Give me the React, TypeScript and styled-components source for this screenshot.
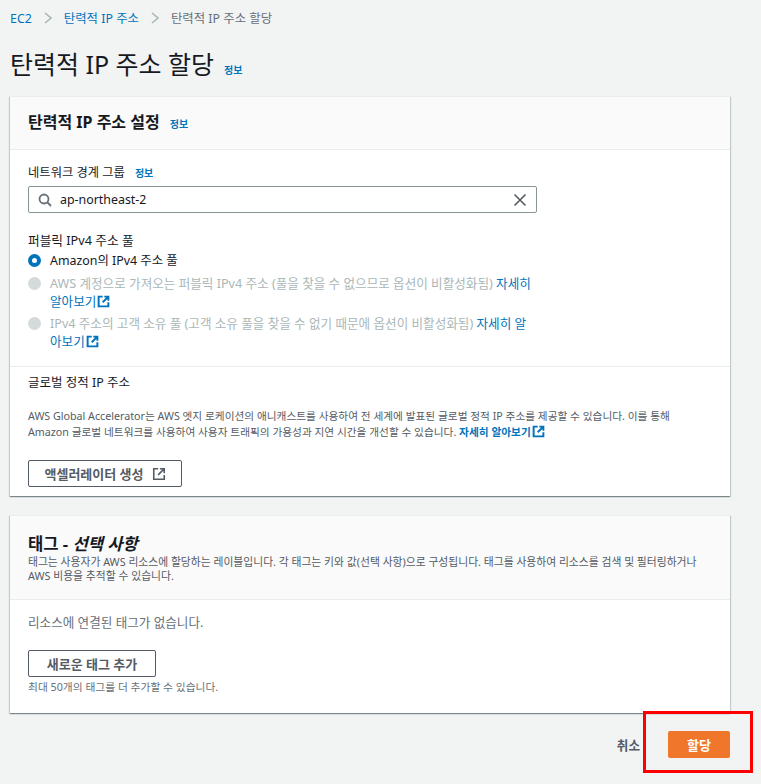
import React from 'react'
import styled, { createGlobalStyle } from 'styled-components'

const GlobalStyle = createGlobalStyle`
  html, body {
    margin: 0;
    padding: 0;
    background: #f2f3f3;
    overflow: hidden;
  }
  body {
    font-family: "Noto Sans", "Noto Sans CJK KR", sans-serif;
    color: #16191f;
    font-size: 13px;
  }
`

const Page = styled.div`
  position: relative;
  width: 761px;
  height: 784px;
  padding: 0 31px 0 10px;
  box-sizing: border-box;
`

const Breadcrumbs = styled.nav`
  display: flex;
  align-items: center;
  height: 36px;
  font-size: 12.4px;
  color: #687078;
`

const Crumb = styled.a`
  color: #0073bb;
`

const Chevron = styled.svg`
  width: 8px;
  height: 12px;
  margin: 0 12px;
  fill: none;
  stroke: #aab7b8;
  stroke-width: 1.6;
`

const PageTitle = styled.div`
  display: flex;
  align-items: baseline;
  gap: 10px;
  height: 60px;
  padding-top: 10px;
  box-sizing: border-box;

  h1 {
    margin: 0;
    font-size: 25px;
    line-height: 36px;
    font-weight: 400;
  }
`

const Info = styled.a`
  color: #0073bb;
  font-size: 10px;
  font-weight: 700;
`

const Card = styled.section`
  display: flow-root;
  background: #fff;
  border-top: 1px solid #eaeded;
  box-shadow: 0 1px 1px 0 rgba(0, 28, 36, 0.3), 1px 1px 1px 0 rgba(0, 28, 36, 0.15),
    -1px 1px 1px 0 rgba(0, 28, 36, 0.15);
  & + & {
    margin-top: 19px;
  }
`

const CardHeader = styled.header<{ $height: number }>`
  height: ${p => p.$height}px;
  box-sizing: border-box;
  background: #fafafa;
  border-bottom: 1px solid #eaeded;
  padding: 0 18px;
  display: flex;
  flex-direction: column;
  justify-content: center;
`

const CardTitle = styled.h2<{ $size: number }>`
  margin: 0;
  font-size: ${p => p.$size}px;
  line-height: 22px;
  font-weight: 700;
  display: flex;
  align-items: baseline;
  gap: 10px;

  em {
    font-style: italic;
  }
`

const Section = styled.div<{ $divided?: boolean }>`
  padding: 14px 18px 0;
  border-bottom: ${p => (p.$divided ? '1px solid #eaeded' : 'none')};
`

const Label = styled.div`
  display: flex;
  align-items: baseline;
  gap: 10px;
  font-size: 12.3px;
  line-height: 18px;
`

const SearchBox = styled.div`
  display: flex;
  align-items: center;
  height: 27px;
  margin-top: 4px;
  box-sizing: border-box;
  border: 1px solid #879596;
  border-radius: 2px;
  padding: 0 9px;
  gap: 8px;
  font-size: 12.4px;
  width: 509px;

  span {
    flex: 1;
  }
`

const Icon = styled.svg`
  flex-shrink: 0;
  fill: none;
  stroke: currentColor;
`

const SearchIcon = styled(Icon)`
  width: 14px;
  height: 14px;
  color: #687078;
  stroke-width: 1.8;
`

const ClearIcon = styled(Icon)`
  width: 14px;
  height: 14px;
  color: #545b64;
  stroke-width: 1.6;
`

const PoolLabel = styled(Label)`
  margin-top: 18px;
  font-size: 12.7px;
`

const RadioList = styled.div`
  display: flex;
  flex-direction: column;
  gap: 4px;
  margin-top: 3px;
  padding-bottom: 15px;
`

const RadioRow = styled.div<{ $disabled?: boolean }>`
  display: flex;
  gap: 9px;
  font-size: ${p => (p.$disabled ? '12.6px' : '12.4px')};
  line-height: 18px;
  color: ${p => (p.$disabled ? '#aab7b8' : '#16191f')};
  width: 505px;

  &:first-child {
    margin-bottom: 1px;
  }
`

const RadioDot = styled.span<{ $checked?: boolean }>`
  width: 13px;
  height: 13px;
  box-sizing: border-box;
  border-radius: 50%;
  flex-shrink: 0;
  margin-top: 2px;
  background: ${p => (p.$checked ? '#fff' : '#d5dbdb')};
  border: ${p => (p.$checked ? '4px solid #0073bb' : 'none')};
`

const Link = styled.a`
  color: #0073bb;
`

const BoldLink = styled(Link)`
  font-weight: 700;
`

const ExternalIcon = styled(Icon)`
  width: 13px;
  height: 13px;
  stroke-width: 2.4;
  vertical-align: -2px;
  margin-left: 1px;
`

const ButtonIcon = styled(ExternalIcon)`
  width: 14px;
  height: 14px;
  stroke-width: 1.8;
  margin-left: 0;
`

const SubHeading = styled.div`
  font-size: 12.5px;
  line-height: 18px;
  margin-top: -7px;
`

const Description = styled.p`
  margin: 16px 0 0;
  max-width: 660px;
  font-size: 10.7px;
  line-height: 16px;
  color: #545b64;
`

const Button = styled.button<{ $width: number }>`
  display: flex;
  align-items: center;
  justify-content: center;
  gap: 8px;
  width: ${p => p.$width}px;
  height: 27px;
  box-sizing: border-box;
  background: #fff;
  border: 1px solid #545b64;
  border-radius: 2px;
  color: #545b64;
  font: 700 13px "Noto Sans", "Noto Sans CJK KR", sans-serif;
  padding: 0;
`

const AcceleratorButton = styled(Button)`
  margin: 20px 0 9px;
`

const HeaderText = styled.p`
  margin: 0;
  font-size: 10.8px;
  line-height: 14px;
  color: #545b64;
`

const EmptyText = styled.div`
  font-size: 12.6px;
  line-height: 18px;
  color: #687078;
`

const TagButton = styled(Button)`
  margin-top: 18px;
`

const Hint = styled.div`
  margin: 3px 0 19px;
  font-size: 10.75px;
  line-height: 14px;
  color: #687078;
`

const Actions = styled.div`
  display: flex;
  justify-content: flex-end;
  align-items: center;
  gap: 28px;
  margin-top: 18px;
`

const CancelLink = styled.a`
  font-size: 12.6px;
  font-weight: 700;
  color: #545b64;
`

const PrimaryButton = styled.button`
  width: 62px;
  height: 27px;
  background: #ef762b;
  border: none;
  border-radius: 2px;
  color: #fff;
  font: 700 13px "Noto Sans", "Noto Sans CJK KR", sans-serif;
  padding: 0;
`

const Highlight = styled.div`
  position: absolute;
  left: 643px;
  top: 711px;
  width: 110px;
  height: 62px;
  box-sizing: border-box;
  border: 3px solid #f00;
`

const externalPath = 'M7 2H2v12h12V9M9 2h5v5M14 2L7 9'

const External = () => (
  <ExternalIcon viewBox="0 0 16 16">
    <path d={externalPath} />
  </ExternalIcon>
)

const CrumbChevron = () => (
  <Chevron viewBox="0 0 8 12">
    <path d="M1 1l6 5-6 5" />
  </Chevron>
)

export default function App() {
  return (
    <Page>
      <GlobalStyle />
      <Breadcrumbs>
        <Crumb>EC2</Crumb>
        <CrumbChevron />
        <Crumb>탄력적 IP 주소</Crumb>
        <CrumbChevron />
        <span>탄력적 IP 주소 할당</span>
      </Breadcrumbs>

      <PageTitle>
        <h1>탄력적 IP 주소 할당</h1>
        <Info>정보</Info>
      </PageTitle>

      <Card>
        <CardHeader $height={53}>
          <CardTitle $size={16}>
            탄력적 IP 주소 설정 <Info>정보</Info>
          </CardTitle>
        </CardHeader>

        <Section $divided>
          <Label>
            네트워크 경계 그룹 <Info>정보</Info>
          </Label>
          <SearchBox>
            <SearchIcon viewBox="0 0 14 14">
              <circle cx="6" cy="6" r="4.5" />
              <path d="M9.5 9.5L13 13" />
            </SearchIcon>
            <span>ap-northeast-2</span>
            <ClearIcon viewBox="0 0 14 14">
              <path d="M1.5 1.5l11 11M12.5 1.5l-11 11" />
            </ClearIcon>
          </SearchBox>

          <PoolLabel>퍼블릭 IPv4 주소 풀</PoolLabel>
          <RadioList>
            <RadioRow>
              <RadioDot $checked />
              <div>Amazon의 IPv4 주소 풀</div>
            </RadioRow>
            <RadioRow $disabled>
              <RadioDot />
              <div>
                AWS 계정으로 가져오는 퍼블릭 IPv4 주소 (풀을 찾을 수 없으므로 옵션이 비활성화됨){' '}
                <Link>
                  자세히 알아보기
                  <External />
                </Link>
              </div>
            </RadioRow>
            <RadioRow $disabled>
              <RadioDot />
              <div>
                IPv4 주소의 고객 소유 풀 (고객 소유 풀을 찾을 수 없기 때문에 옵션이 비활성화됨){' '}
                <Link>
                  자세히 알아보기
                  <External />
                </Link>
              </div>
            </RadioRow>
          </RadioList>
        </Section>

        <Section>
          <SubHeading>글로벌 정적 IP 주소</SubHeading>
          <Description>
            AWS Global Accelerator는 AWS 엣지 로케이션의 애니캐스트를 사용하여 전 세계에 발표된 글로벌 정적
            IP 주소를 제공할 수 있습니다. 이를 통해 Amazon 글로벌 네트워크를 사용하여 사용자 트래픽의
            가용성과 지연 시간을 개선할 수 있습니다.{' '}
            <BoldLink>
              자세히 알아보기
              <External />
            </BoldLink>
          </Description>
          <AcceleratorButton $width={154}>
            액셀러레이터 생성
            <ButtonIcon viewBox="0 0 16 16">
              <path d={externalPath} />
            </ButtonIcon>
          </AcceleratorButton>
        </Section>
      </Card>

      <Card>
        <CardHeader $height={84}>
          <CardTitle $size={16.6}>
            <span>
              태그 - <em>선택 사항</em>
            </span>
          </CardTitle>
          <HeaderText>
            태그는 사용자가 AWS 리소스에 할당하는 레이블입니다. 각 태그는 키와 값(선택 사항)으로 구성됩니다.
            태그를 사용하여 리소스를 검색 및 필터링하거나 AWS 비용을 추적할 수 있습니다.
          </HeaderText>
        </CardHeader>
        <Section>
          <EmptyText>리소스에 연결된 태그가 없습니다.</EmptyText>
          <TagButton $width={128}>새로운 태그 추가</TagButton>
          <Hint>최대 50개의 태그를 더 추가할 수 있습니다.</Hint>
        </Section>
      </Card>

      <Actions>
        <CancelLink>취소</CancelLink>
        <PrimaryButton>할당</PrimaryButton>
      </Actions>

      <Highlight />
    </Page>
  )
}
